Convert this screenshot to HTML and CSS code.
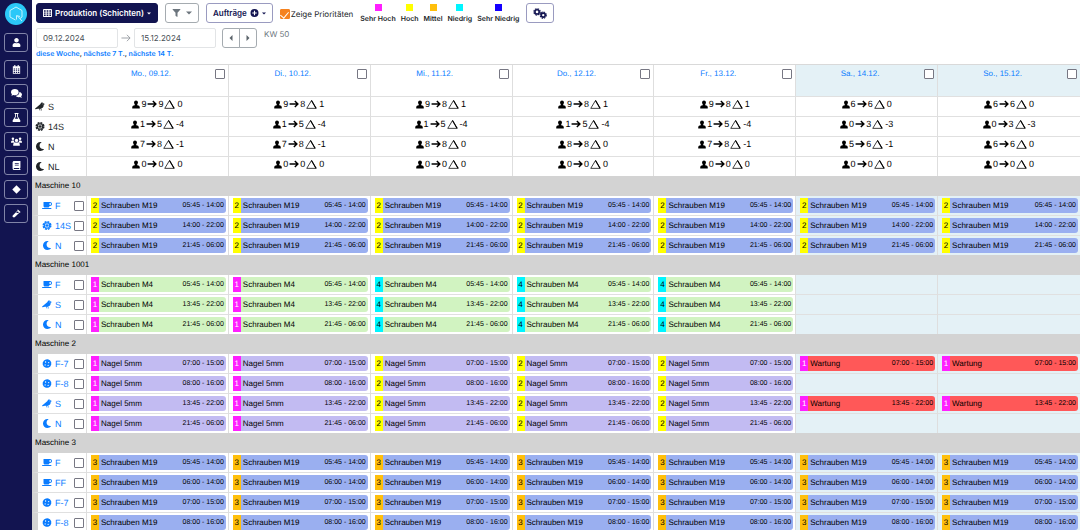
FILE: index.html
```html
<!DOCTYPE html>
<html lang="de">
<head>
<meta charset="utf-8">
<title>Produktion (Schichten)</title>
<link rel="stylesheet" href="styles.css">
</head>
<body>
<svg class="sprite" aria-hidden="true">
  <symbol id="i-user" viewBox="0 0 448 512"><path d="M224 256c70.7 0 128-57.3 128-128S294.700 0 224 0 96 57.300 96 128s57.300 128 128 128zm89.600 32h-16.700c-22.200 10.200-46.900 16-72.900 16s-50.600-5.800-72.900-16h-16.700C60.200 288 0 348.200 0 422.400V464c0 26.500 21.500 48 48 48h352c26.500 0 48-21.500 48-48v-41.600c0-74.200-60.200-134.400-134.400-134.400z"/></symbol>
  <symbol id="i-person" viewBox="0 0 16 16"><circle cx="8" cy="4" r="3.900"/><path d="M5.500 6h5v3.500c3 .5 5 1.500 5 3.700V16H.5v-2.800c0-2.200 2-3.200 5-3.700z"/></symbol>
  <symbol id="i-moon" viewBox="0 0 512 512"><path d="M283 512c79 0 151-36 199-95 7-9-1-21-12-19-124 24-238-72-238-197 0-72 39-139 102-174 9-6 7-21-4-23A258 258 0 0 0 283 0C142 0 27 115 27 256c0 141 115 256 256 256z"/></symbol>
  <symbol id="i-cup" viewBox="0 0 640 512"><path fill-rule="evenodd" d="M192 384h192c53 0 96-43 96-96h32c70.600 0 128-57.400 128-128S582.600 32 512 32H120c-13.300 0-24 10.700-24 24v232c0 53 43 96 96 96zM512 96c35.300 0 64 28.700 64 64s-28.700 64-64 64h-32V96h32zm47.700 384H48.300c-47.600 0-61-64-36-64h583.300c25 0 11.800 64-35.900 64z"/></symbol>
  <symbol id="i-crow" viewBox="0 0 20 16"><path fill-rule="evenodd" d="M20 3.200 17.200 2C16.600.7 15.500 0 14.200 0 12.500 0 11 1.300 11 3L.4 11.800c-.8.800-.3 2 .8 1.800L6 12.300h2.200l1.300 3.500h1.200l-1.200-3.500h1.600l1.300 3.500h1.200l-1.300-3.700c3.100-.8 5-3 5-6V4.300zM14.600 2.200a.7.7 0 1 1 0 1.400.7.7 0 0 1 0-1.400z"/></symbol>
  <symbol id="i-wheel" viewBox="0 0 16 16"><circle cx="8" cy="8" r="6.700" fill="none" stroke="currentColor" stroke-width="2.600" stroke-dasharray="3.500 1.760"/><circle cx="8" cy="8" r="4.900" fill="none" stroke="currentColor" stroke-width="2"/><circle cx="8" cy="8" r="1.700"/><path d="M8 3v10M3 8h10M4.500 4.500l7 7M11.500 4.500l-7 7" stroke="currentColor" stroke-width="1.100"/></symbol>
  <symbol id="i-cookie" viewBox="0 0 16 16"><path fill-rule="evenodd" d="M6 .8 9.500.3l3.700 1.900 2.300 3.700v4.200l-2 3.500-3.500 2H6.200L2.500 13.700.4 10V6.200L2.600 2.500zM5.500 4.200a1.200 1.200 0 1 0 0 2.400 1.200 1.200 0 0 0 0-2.400zM11 5.200a1.100 1.100 0 1 0 0 2.200 1.100 1.100 0 0 0 0-2.200zM4.700 9.500a1.100 1.100 0 1 0 0 2.200 1.100 1.100 0 0 0 0-2.200zM10 10a1.200 1.200 0 1 0 0 2.400 1.200 1.200 0 0 0 0-2.400z"/></symbol>
  <symbol id="i-arrow" viewBox="0 0 18 14"><path d="M1 7h15M10.500 1.500 16 7l-5.500 5.500" fill="none" stroke="currentColor" stroke-width="2.600"/></symbol>
  <symbol id="i-delta" viewBox="0 0 22 18"><path d="M11 1 1.500 16.700h19z" fill="none" stroke="currentColor" stroke-width="1.500"/><path d="m11 1 9 15.700" stroke="currentColor" stroke-width="2.200"/></symbol>
  <symbol id="i-range" viewBox="0 0 22 18"><path d="M1 9h19M13 2l7 7-7 7" fill="none" stroke="currentColor" stroke-width="1.800"/></symbol>
  <symbol id="i-calendar" viewBox="0 0 16 16"><path fill-rule="evenodd" d="M4 0h2v2h4V0h2v2h2.500v13.500h-13V2H4zM3 6v2h2.500V6zm4 0v2h2V6zm3.500 0v2H13V6zM3 9.500v1.500h2.500V9.500zm4 0v1.500h2V9.500zm3.500 0v1.500H13V9.500zM3 12.500V14h2.500v-1.500zm4 0V14h2v-1.500zm3.500 0V14H13v-1.500z"/></symbol>
  <symbol id="i-chat" viewBox="0 0 20 16"><path d="M7 0c3.900 0 7 2.400 7 5.500S10.900 11 7 11c-1 0-2-.2-2.900-.5C3 11.300 1.500 11.800.3 11.800c.6-.7 1.200-1.700 1.400-2.600C.6 8.200 0 7 0 5.500 0 2.400 3.100 0 7 0z"/><path d="M15.200 5.200C18 5.700 20 7.500 20 9.800c0 1.300-.6 2.400-1.600 3.300.3.900.9 1.900 1.500 2.600-1.400 0-2.800-.5-3.900-1.300-3 .9-6.300 0-7.700-2.200 4 0 7.200-3 6.900-7z"/></symbol>
  <symbol id="i-flask" viewBox="0 0 16 16"><path fill-rule="evenodd" d="M4.500 0h7v1.700h-1V6l4.300 7.200c.8 1.300-.1 2.800-1.600 2.800H2.800c-1.500 0-2.400-1.500-1.600-2.800L5.500 6V1.700h-1zM7 1.700v4.700L5 10h6L9 6.400V1.700z"/></symbol>
  <symbol id="i-team" viewBox="0 0 20 16"><circle cx="3.500" cy="3" r="2.300"/><circle cx="16.500" cy="3" r="2.300"/><circle cx="10" cy="6" r="3"/><path d="M0 9.500C0 7.500 1.300 6.300 3 6.300h2.300c0 1.700.7 2.900 1.700 3.900H0zM20 9.500c0-2-1.300-3.200-3-3.200h-2.300c0 1.700-.7 2.900-1.700 3.900h7zM4 15.500v-1.500C4 11.500 5.500 10 7.800 10h4.400c2.300 0 3.800 1.500 3.800 4v1.500z"/></symbol>
  <symbol id="i-book" viewBox="0 0 16 16"><path fill-rule="evenodd" d="M3.700 0H15v12l-.6.600v1.700H15V16H3.700C2.200 16 1 14.800 1 13.300V2.700C1 1.200 2.200 0 3.700 0zM5 4v1.300h7V4zm0 2.700V8h7V6.700zm-1.200 5.800c-1 0-1 1.800 0 1.800h9v-1.800z"/></symbol>
  <symbol id="i-diamond" viewBox="0 0 16 16"><path d="m8 .5 7.500 7.500L8 15.500.5 8z"/></symbol>
  <symbol id="i-tool" viewBox="0 0 16 16"><path fill-rule="evenodd" d="m10.500.8 4.700 4.700-1.100 1.100-.6-.5-8.300 8.300c-1 1-2.500 1-3.500 0s-1-2.500 0-3.500L10 2.500 9.400 1.900zM10.300 4 7 7.300h4L12.200 6z"/></symbol>
  <symbol id="i-grid" viewBox="0 0 16 14"><path fill-rule="evenodd" d="M1 0h14l1 1v12l-1 1H1l-1-1V1zM1.700 2v2.600h3V2zm4.800 0v2.600h3V2zm4.800 0v2.600h3V2zM1.700 6v2.400h3V6zm4.800 0v2.400h3V6zm4.800 0v2.400h3V6zM1.700 9.800v2.400h3V9.800zm4.800 0v2.400h3V9.800zm4.800 0v2.400h3V9.800z"/></symbol>
  <symbol id="i-filter" viewBox="0 0 16 16"><path d="M.7 0h14.600c.7 0 1 .7.500 1.200L10 7.500V15c0 .6-.7 1-1.200.6L6.500 14c-.3-.2-.5-.5-.5-.8V7.500L.2 1.200C-.3.700 0 0 .7 0z"/></symbol>
  <symbol id="i-plus" viewBox="0 0 16 16"><path fill-rule="evenodd" d="M8 0a8 8 0 1 1 0 16A8 8 0 0 1 8 0zM6.900 3.500v3.400H3.500v2.200h3.400v3.400h2.200V9.100h3.400V6.900H9.100V3.500z"/></symbol>
  <symbol id="i-gears" viewBox="0 0 26 20"><g fill="none" stroke="currentColor"><circle cx="7.500" cy="7" r="4" stroke-width="3"/><circle cx="7.500" cy="7" r="6" stroke-width="2" stroke-dasharray="3.100 1.610"/><circle cx="19" cy="13" r="3.700" stroke-width="3"/><circle cx="19" cy="13" r="5.700" stroke-width="2" stroke-dasharray="2.900 1.570"/></g></symbol>
  <symbol id="i-caret" viewBox="0 0 10 6"><path d="M0 .5h10L5 5.500z"/></symbol>
  <symbol id="i-prev" viewBox="0 0 6 10"><path d="M5.500 0v10L.5 5z"/></symbol>
  <symbol id="i-next" viewBox="0 0 6 10"><path d="M.5 0v10l5-5z"/></symbol>
</svg>

<div class="app">
  <nav class="sidebar" aria-label="Hauptmenü">
    <a class="logo" href="#" aria-label="Startseite">
      <svg viewBox="0 0 44 44"><circle cx="22" cy="22" r="22" fill="#2bc8f8"/><g fill="none" stroke="#c4f3ff" stroke-width="2"><path d="M21 34 10 28V15l12-7 12 7v13l-4 3M25 26l9 10M23 33v-8l7 2"/></g></svg>
    </a>
    <button class="nav-btn nav-user" aria-label="Benutzer"><svg><use href="#i-user"/></svg></button>
    <button class="nav-btn" aria-label="Kalender"><svg><use href="#i-calendar"/></svg></button>
    <button class="nav-btn" aria-label="Nachrichten"><svg><use href="#i-chat"/></svg></button>
    <button class="nav-btn" aria-label="Labor"><svg><use href="#i-flask"/></svg></button>
    <button class="nav-btn" aria-label="Team"><svg><use href="#i-team"/></svg></button>
    <button class="nav-btn" aria-label="Handbuch"><svg><use href="#i-book"/></svg></button>
    <button class="nav-btn" aria-label="Status"><svg><use href="#i-diamond"/></svg></button>
    <button class="nav-btn" aria-label="Werkzeuge"><svg><use href="#i-tool"/></svg></button>
  </nav>

  <main class="main">
    <header class="toolbar">
      <div class="bar-row">
        <button class="btn btn-primary"><svg class="ic"><use href="#i-grid"/></svg>Produktion (Schichten)<svg class="caret"><use href="#i-caret"/></svg></button>
        <button class="btn btn-muted" aria-label="Filter"><svg class="ic"><use href="#i-filter"/></svg><svg class="caret"><use href="#i-caret"/></svg></button>
        <button class="btn btn-outline">Aufträge<svg class="ic"><use href="#i-plus"/></svg><svg class="caret"><use href="#i-caret"/></svg></button>
        <label class="prio"><input type="checkbox" class="check-orange" checked>Zeige Prioritäten</label>
        <ul class="legend">
          <li><i class="p1"></i>Sehr Hoch</li>
          <li><i class="p2"></i>Hoch</li>
          <li><i class="p3"></i>Mittel</li>
          <li><i class="p4"></i>Niedrig</li>
          <li><i class="p5"></i>Sehr Niedrig</li>
        </ul>
        <button class="btn btn-outline btn-gears" aria-label="Einstellungen"><svg><use href="#i-gears"/></svg></button>
      </div>
      <div class="date-row">
        <input class="date" type="text" value="09.12.2024" aria-label="Von">
        <svg class="range"><use href="#i-range"/></svg>
        <input class="date" type="text" value="15.12.2024" aria-label="Bis">
        <div class="pager">
          <button aria-label="Zurück"><svg><use href="#i-prev"/></svg></button>
          <button aria-label="Weiter"><svg><use href="#i-next"/></svg></button>
        </div>
        <span class="week">KW 50</span>
      </div>
      <p class="quick"><a href="#">diese Woche</a>, <a href="#">nächste 7 T.</a>, <a href="#">nächste 14 T.</a></p>
    </header>

    <table class="plan">
      <colgroup><col class="col-label"><col><col><col><col><col><col><col></colgroup>
      <thead id="head"></thead>
      <tbody id="body"></tbody>
    </table>
  </main>
</div>
<script src="plan.js"></script>
</body>
</html>
```
FILE: styles.css
```css
* { box-sizing: border-box; }
body { margin: 0; background: #fff; color: #212529; font-family: Inter, "Liberation Sans", sans-serif; font-size: 8px; text-rendering: geometricPrecision; }
svg { display: block; fill: currentColor; flex: none; }
a { color: #0a7cff; text-decoration: none; }
button, input { font: inherit; margin: 0; }
.sprite { position: absolute; width: 0; height: 0; }

.app { display: flex; height: 100vh; overflow: hidden; }
.sidebar { flex: 0 0 32px; background: #121450; display: flex; flex-direction: column; align-items: center; gap: 5px; padding-top: 3px; }
.logo svg { width: 22px; height: 22px; }
.nav-btn { width: 24px; height: 19px; padding: 0; border: 1px solid #8184a8; border-radius: 3px; background: transparent; color: #fff; display: flex; align-items: center; justify-content: center; }
.nav-btn svg { width: 11px; height: 9px; }
.nav-user { margin: 3px 0; }
.main { flex: 1; min-width: 0; }

.toolbar { height: 64px; padding: 3px 4px 0; }
.bar-row { display: flex; align-items: flex-start; gap: 7px; height: 25px; }
.btn { height: 20px; padding: 0 6px; border-radius: 3px; border: 1px solid; display: flex; align-items: center; gap: 3px; white-space: nowrap; }
.btn-primary { background: #121450; border-color: #121450; color: #fff; font-weight: 600; }
.btn-muted { background: #fff; border-color: #a5abb0; color: #6c757d; gap: 5px; }
.btn-outline { background: #fff; border-color: #9a9bc0; color: #121450; font-weight: 600; }
.ic { width: 9px; height: 8px; }
.caret { width: 4px; height: 3px; }
.btn-muted .caret { width: 6px; height: 4px; }
.btn-gears svg { width: 14px; height: 11px; }
.prio { display: flex; align-items: center; gap: 1px; height: 21px; white-space: nowrap; }
input[type="checkbox"] { appearance: none; width: 10px; height: 10px; border: 1px solid #777783; border-radius: 1px; background: #fff; flex: none; display: block; }
.check-orange:checked { background: #f5821f; border-color: #f5821f; display: grid; place-items: center; }
.check-orange:checked::after { content: ""; width: 4px; height: 7px; border: solid #fff; border-width: 0 1px 1px 0; transform: rotate(40deg); }
.legend { list-style: none; display: flex; gap: 5px; margin: 0; padding: 1px 0 0; font-size: 7px; font-weight: 600; line-height: 8px; white-space: nowrap; }
.legend li { display: flex; flex-direction: column; align-items: center; gap: 4px; }
.legend i { width: 7px; height: 7px; }
.p1 { background: #ff1fff; color: #fff; }
.p2 { background: #ffff00; }
.p3 { background: #ffbf0b; }
.p4 { background: #00f5ff; }
.p5 { background: #1500ff; color: #fff; }

.date-row { display: flex; height: 20px; }
.date { width: 82px; padding: 0 6px; border: 1px solid #e2e4e6; border-radius: 2px; color: #495057; background: #fff; }
.range { width: 10px; height: 10px; margin: 5px 3px; color: #8a9096; }
.pager { display: flex; margin-left: 6px; }
.pager button { width: 18px; border: 1px solid #a5abb0; border-radius: 3px 0 0 3px; background: #fff; color: #5b636a; padding: 0; display: grid; place-items: center; }
.pager button + button { border-radius: 0 3px 3px 0; margin-left: -1px; }
.pager svg { width: 4px; height: 6px; }
.week { margin-left: 7px; line-height: 12px; color: #6c757d; }
.quick { margin: 1px 0 0; font-size: 7px; line-height: 10px; font-weight: 600; }

.plan { width: 100%; table-layout: fixed; border-collapse: separate; border-spacing: 0; font-family: "Liberation Sans", Arial, sans-serif; font-size: 8px; line-height: 10px; color: #000; border-top: 1px solid #d9d9d9; }
.col-label { width: 55px; }
.plan td, .plan th { padding: 0; font-weight: 400; border-bottom: 1px solid #e0e0e0; border-right: 1px solid #dedede; text-align: left; }
.plan td:last-child, .plan th:last-child { border-right: 0; }
.plan .last > * { border-bottom: 0; }
.plan thead tr:first-child { height: 32px; }
.plan .day { vertical-align: top; padding: 4px 3px 0 0; }
.day-in { display: flex; align-items: center; }
.day-in a { flex: 1; text-align: center; -webkit-text-stroke: 0; }
.plan .we { background: #e4f1f6; }
.plan .stat { height: 20px; }
.plan .stat.last { height: 19px; }
.plan .stat td { vertical-align: top; padding-top: 2px; }
.counts { display: flex; align-items: center; justify-content: center; gap: 1px; height: 10px; font-size: 9px; }
.counts .i-person { width: 8px; height: 9px; }
.counts .i-arrow { width: 10px; height: 8px; }
.counts .i-delta { width: 11px; height: 9px; margin-right: 1px; }
.label { display: flex; align-items: center; font-size: 9px; }
.label svg { width: 10px; height: 9px; }
.label span { padding-left: 3px; flex: 1; white-space: nowrap; }
.stat .label { padding-left: 3px; color: #212529; }
.plan .group th { height: 20px; padding-left: 3px; background: #d3d3d3; border: 0; }
.plan .shift { height: 20px; }
.plan .shift.last { height: 19px; }
.plan .shift th { border-left: 6px solid #d3d3d3; padding: 0 2px 0 4px; color: #0a7cff; }
.plan .shift td { padding: 0 2px 0 4px; }
.job { display: flex; height: 15px; line-height: 15px; border-radius: 0 3px 3px 0; overflow: hidden; white-space: nowrap; }
.job b { width: 8px; font-weight: 400; text-align: center; flex: none; }
.job span { flex: 1; padding-left: 2px; }
.job time { font-size: 7px; padding-right: 2px; line-height: 15px; }
.blue { background: #9aaff0; }
.green { background: #d1f3c1; }
.violet { background: #c2bbf2; }
.red { background: #ff5858; }
```
FILE: plan.js
```js
const days = ["Mo., 09.12.", "Di., 10.12.", "Mi., 11.12.", "Do., 12.12.", "Fr., 13.12.", "Sa., 14.12.", "So., 15.12."];

const stats = [
  ["crow", "S", ["9 9 0", "9 8 1", "9 8 1", "9 8 1", "9 8 1", "6 6 0", "6 6 0"]],
  ["wheel", "14S", ["1 5 -4", "1 5 -4", "1 5 -4", "1 5 -4", "1 5 -4", "0 3 -3", "0 3 -3"]],
  ["moon", "N", ["7 8 -1", "7 8 -1", "8 8 0", "8 8 0", "7 8 -1", "5 6 -1", "6 6 0"]],
  ["moon", "NL", ["0 0 0", "0 0 0", "0 0 0", "0 0 0", "0 0 0", "0 0 0", "0 0 0"]]
];

const jobs = { s: ["Schrauben M19", "blue"], m: ["Schrauben M4", "green"], n: ["Nagel 5mm", "violet"], w: ["Wartung", "red"] };

// Each shift: icon, name, time span, one job code with priority per day.
const machines = [
  ["Maschine 10", [
    ["cup", "F", "05:45 - 14:00", "s2 s2 s2 s2 s2 s2 s2"],
    ["wheel", "14S", "14:00 - 22:00", "s2 s2 s2 s2 s2 s2 s2"],
    ["moon", "N", "21:45 - 06:00", "s2 s2 s2 s2 s2 s2 s2"]]],
  ["Maschine 1001", [
    ["cup", "F", "05:45 - 14:00", "m1 m1 m4 m4 m4 - -"],
    ["crow", "S", "13:45 - 22:00", "m1 m1 m4 m4 m4 - -"],
    ["moon", "N", "21:45 - 06:00", "m1 m1 m4 m4 m4 - -"]]],
  ["Maschine 2", [
    ["cookie", "F-7", "07:00 - 15:00", "n1 n1 n2 n2 n2 w1 w1"],
    ["cookie", "F-8", "08:00 - 16:00", "n1 n1 n2 n2 n2 - -"],
    ["crow", "S", "13:45 - 22:00", "n1 n1 n2 n2 n2 w1 w1"],
    ["moon", "N", "21:45 - 06:00", "n1 n1 n2 n2 n2 - -"]]],
  ["Maschine 3", [
    ["cup", "F", "05:45 - 14:00", "s3 s3 s3 s3 s3 s3 s3"],
    ["cup", "FF", "06:00 - 14:00", "s3 s3 s3 s3 s3 s3 s3"],
    ["cookie", "F-7", "07:00 - 15:00", "s3 s3 s3 s3 s3 s3 s3"],
    ["cookie", "F-8", "08:00 - 16:00", "s3 s3 s3 s3 s3 s3 s3"]]]
];

const icon = n => `<svg class="i-${n}"><use href="#i-${n}"/></svg>`;
const last = (i, list) => i === list.length - 1 ? " last" : "";
const weekend = i => i > 4 ? "we" : "";

document.getElementById("head").innerHTML =
  `<tr><th></th>${days.map((d, i) => `<th class="day ${weekend(i)}"><div class="day-in"><a href="#">${d}</a><input type="checkbox" aria-label="${d}"></div></th>`).join("")}</tr>` +
  stats.map(([ic, name, cells], r) => `<tr class="stat${last(r, stats)}"><th><div class="label">${icon(ic)}<span>${name}</span></div></th>${
    cells.map(c => {
      const [have, need, diff] = c.split(" ");
      return `<td><div class="counts">${icon("person")}<span>${have}</span>${icon("arrow")}<span>${need}</span>${icon("delta")}<span>${diff}</span></div></td>`;
    }).join("")}</tr>`).join("");

document.getElementById("body").innerHTML = machines.map(([title, shifts]) =>
  `<tr class="group"><th colspan="8">${title}</th></tr>` +
  shifts.map(([ic, name, time, codes], r) => `<tr class="shift${last(r, shifts)}"><th><div class="label">${icon(ic)}<span>${name}</span><input type="checkbox" aria-label="${title} ${name}"></div></th>${
    codes.split(" ").map((c, i) => {
      if (c === "-") return `<td class="${weekend(i)}"></td>`;
      const [text, color] = jobs[c[0]];
      return `<td class="${weekend(i)}"><div class="job ${color}"><b class="p${c[1]}">${c[1]}</b><span>${text}</span><time>${time}</time></div></td>`;
    }).join("")}</tr>`).join("")).join("");
```
